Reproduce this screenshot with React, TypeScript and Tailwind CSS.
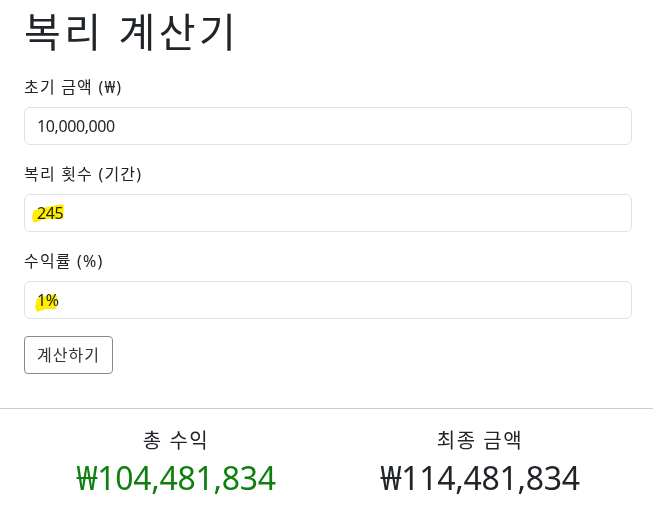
import React from "react";

const FONT = { fontFamily: '"Noto Sans", "Noto Sans CJK KR", sans-serif' };

function Highlight({ points }: { points: string }) {
  return (
    <svg
      className="pointer-events-none absolute left-0 top-0 mix-blend-multiply"
      width="60"
      height="38"
      viewBox="0 0 60 38"
    >
      <polygon points={points} fill="#ffee00" />
    </svg>
  );
}

function Field({
  label,
  value,
  mark,
}: {
  label: string;
  value: string;
  mark?: string;
}) {
  return (
    <div className="mb-[17px]">
      <label className="mb-2 block h-6 text-[16px] leading-6 tracking-[1.2px] text-[#212529]">{label}</label>
      <div className="relative">
        <input
          readOnly
          value={value}
          style={FONT}
          className="block h-[38px] w-full rounded-[6px] border border-[#dee2e6] bg-white px-3 text-[16px] tracking-[-0.4px] text-[#212529] outline-none"
        />
        {mark && <Highlight points={mark} />}
      </div>
    </div>
  );
}

export default function App() {
  return (
    <div style={FONT} className="min-h-screen bg-white text-[#212529]">
      <div className="pl-6 pr-[21px] pt-[8px]">
        <h1 className="mb-[19px] text-[40px] font-normal leading-[48px] tracking-[3.5px]">복리 계산기</h1>
        <Field label="초기 금액 (₩)" value="10,000,000" />
        <Field
          label="복리 횟수 (기간)"
          value="245"
          mark="10,16 38,10 40,12 39,25 20,25 10,29 8,24 9,19"
        />
        <Field
          label="수익률 (%)"
          value="1%"
          mark="13,17 31,13 33,16 32,28 22,28 13,31 11,26"
        />
        <button className="h-[38px] w-[89px] rounded-[4px] border border-[#8a8a8a] bg-white text-[16px] tracking-[1px] text-[#333]">
          계산하기
        </button>
      </div>
      <div className="mt-[34px] border-t border-[#cccccc]" />
      <div className="grid grid-cols-2 pl-6 pr-[21px] pt-5 text-center">
        <div>
          <div className="mb-1.5 text-[20px] leading-6 tracking-[1.5px]">총 수익</div>
          <div className="text-[32px] leading-[38px] tracking-[-0.3px] text-[#0f800f]">₩104,481,834</div>
        </div>
        <div>
          <div className="mb-1.5 text-[20px] leading-6 tracking-[1.5px]">최종 금액</div>
          <div className="text-[32px] leading-[38px] tracking-[-0.3px] text-[#212529]">₩114,481,834</div>
        </div>
      </div>
    </div>
  );
}
